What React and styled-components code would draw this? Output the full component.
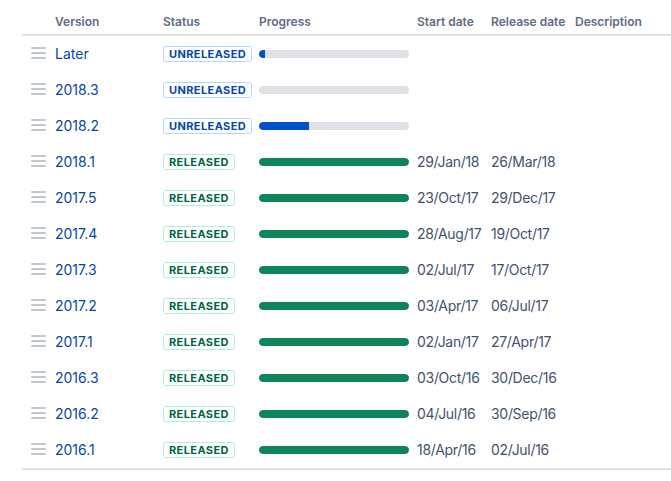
import React from 'react';
import styled, { createGlobalStyle } from 'styled-components';

const GlobalStyle = createGlobalStyle`
  body {
    margin: 0;
    background: #fff;
    font-family: Inter, "Liberation Sans", sans-serif;
  }
`;

const versions = [
  { name: 'Later', released: false, progress: 4 },
  { name: '2018.3', released: false, progress: 0 },
  { name: '2018.2', released: false, progress: 33 },
  { name: '2018.1', released: true, start: '29/Jan/18', end: '26/Mar/18' },
  { name: '2017.5', released: true, start: '23/Oct/17', end: '29/Dec/17' },
  { name: '2017.4', released: true, start: '28/Aug/17', end: '19/Oct/17' },
  { name: '2017.3', released: true, start: '02/Jul/17', end: '17/Oct/17' },
  { name: '2017.2', released: true, start: '03/Apr/17', end: '06/Jul/17' },
  { name: '2017.1', released: true, start: '02/Jan/17', end: '27/Apr/17' },
  { name: '2016.3', released: true, start: '03/Oct/16', end: '30/Dec/16' },
  { name: '2016.2', released: true, start: '04/Jul/16', end: '30/Sep/16' },
  { name: '2016.1', released: true, start: '18/Apr/16', end: '02/Jul/16' },
];

const Table = styled.div`
  margin-left: 22px;
  border-bottom: 2px solid #dfe1e6;
`;

const Row = styled.div`
  display: grid;
  grid-template-columns: 33px 108px 96px 158px 74px 84px 1fr;
  align-items: center;
  height: ${(p) => (p.head ? '34px' : '36px')};
  border-bottom: ${(p) => (p.head ? '2px solid #dfe1e6' : 'none')};
`;

const HeadCell = styled.div`
  font-size: 12px;
  font-weight: 600;
  color: #5e6c84;
  white-space: nowrap;
  padding-top: 8px;
`;

const Handle = styled.div`
  display: flex;
  flex-direction: column;
  gap: 3px;
  width: 15px;
  margin-left: 9px;
  margin-top: -2px;
  span {
    height: 2px;
    background: #c1c7d0;
    border-radius: 1px;
  }
`;

const VersionLink = styled.a`
  font-size: 14px;
  color: #0747a6;
  text-decoration: none;
  margin-top: -2px;
`;

const Lozenge = styled.span`
  justify-self: start;
  display: inline-block;
  box-sizing: border-box;
  height: 16px;
  line-height: 14px;
  padding: 0 5px;
  border-radius: 3px;
  font-size: 11px;
  font-weight: 700;
  letter-spacing: 0.4px;
  text-transform: uppercase;
  border: 1px solid ${(p) => (p.released ? '#abf5d1' : '#b3d4ff')};
  color: ${(p) => (p.released ? '#006644' : '#0747a6')};
`;

const Bar = styled.div`
  width: 150px;
  height: 8px;
  border-radius: 4px;
  background: #dfe1e6;
  overflow: hidden;
  margin-top: -1px;
`;

const Fill = styled.div`
  height: 100%;
  background: ${(p) => (p.released ? '#0e8558' : '#0052cc')};
  border-radius: ${(p) => (p.released ? '4px' : '4px 0 0 4px')};
`;

const DateCell = styled.div`
  font-size: 14px;
  letter-spacing: -0.3px;
  color: #42526e;
  white-space: nowrap;
  margin-top: -2px;
`;

export default function App() {
  return (
    <>
      <GlobalStyle />
      <Table>
        <Row head>
          <div />
          <HeadCell>Version</HeadCell>
          <HeadCell>Status</HeadCell>
          <HeadCell>Progress</HeadCell>
          <HeadCell>Start date</HeadCell>
          <HeadCell>Release date</HeadCell>
          <HeadCell>Description</HeadCell>
        </Row>
        {versions.map((v) => (
          <Row key={v.name}>
            <Handle>
              <span />
              <span />
              <span />
            </Handle>
            <VersionLink href="#">{v.name}</VersionLink>
            <Lozenge released={v.released}>{v.released ? 'Released' : 'Unreleased'}</Lozenge>
            <Bar>
              <Fill released={v.released} style={{ width: (v.released ? 100 : v.progress) + '%' }} />
            </Bar>
            <DateCell>{v.start}</DateCell>
            <DateCell>{v.end}</DateCell>
            <div />
          </Row>
        ))}
      </Table>
    </>
  );
}
